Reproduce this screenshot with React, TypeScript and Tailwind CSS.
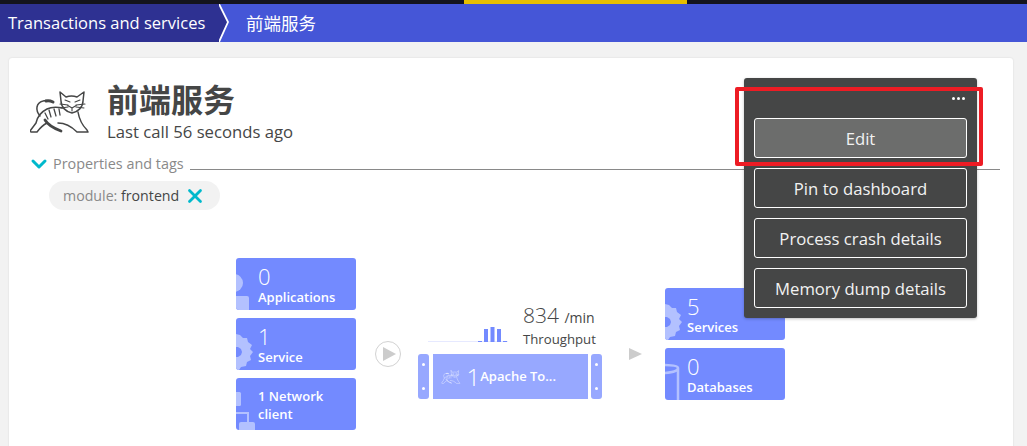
import type { ReactNode } from "react";
import { X, ChevronDown } from "lucide-react";

const font = "[font-family:'Open_Sans','Noto_Sans_CJK_SC',sans-serif]";

function Cat({ className, color = "#454646" }: { className: string; color?: string }) {
  return (
    <svg viewBox="0 0 60 44" className={className} fill="none" stroke={color} strokeLinecap="round" strokeLinejoin="round">
      <path strokeWidth="1.500" d="M30 2l1 9c0 6 5 11 11 12 6-1 11-6 11-12l1-9-7 5c-3-1-8-1-11 0z" />
      <path strokeWidth="1.100" d="M35 10l5 2M50 10l-5 2M37 15l5 3 5-3M42 18v3M30 14l8 1M46 15l9-1M31 18l7-1M46 17l8 1" />
      <path strokeWidth="1.500" d="M33 18c-6-1-12-1-16 1-6 3-10 9-11 14L0 41l1 1h6c3-4 6-7 10-9" />
      <path strokeWidth="1.500" d="M10 26C5 20 6 13 13 11c3-1 5 0 7 0" />
      <path strokeWidth="3" d="M16 11c3-1 5 0 7 1" />
      <path strokeWidth="1.500" d="M48 22c1 6 4 13 9 18l1 2H47c-5-5-11-9-19-9" />
      <path strokeWidth="2.800" d="M15 30c3 5 8 8 16 11" />
      <path strokeWidth="1.300" d="M19 20l2 7M24 19l2 7M29 19l1 6M15 23l3 6" />
    </svg>
  );
}

function Tile({ children, icon }: { children: ReactNode; icon: ReactNode }) {
  return (
    <div className="relative flex h-[52px] w-[120px] flex-col justify-center overflow-hidden rounded-[3px] bg-[#738aff] pt-[2px] pl-[22px] text-white">
      {icon}
      {children}
    </div>
  );
}

function Counted({ n, label }: { n: string; label: string }) {
  return (
    <>
      <span className="text-[22px] leading-[24px] font-light">{n}</span>
      <span className="text-[13px] leading-[18px] font-semibold">{label}</span>
    </>
  );
}

const gear = (
  <svg viewBox="0 0 18 36" className="absolute top-[16px] left-0 h-9 w-[18px]" fill="#b3c1ff">
    <path d="M0 0l4 1 3 3 4 0 1 4 4 3-2 4 3 3-3 4 1 4-4 2-1 4-5 1-2 3H0z" />
    <path d="M0 13h2l3 2 1 3-1 3-3 2H0z" fill="#738aff" />
  </svg>
);

const appIcon = (
  <svg viewBox="0 0 16 52" className="absolute top-0 left-0 h-[52px] w-4" fill="#b3c1ff">
    <circle cx="-2" cy="25" r="9" />
    <rect x="-3" y="38" width="16" height="18" rx="2" />
  </svg>
);

const netIcon = (
  <svg viewBox="0 0 20 52" className="absolute top-0 left-0 h-[52px] w-5" fill="#b3c1ff">
    <rect x="-2" y="14" width="7" height="14" rx="1.500" />
    <path d="M0 34h13v10h-2v-8H0z" />
    <rect x="3" y="44" width="16" height="10" rx="2" />
  </svg>
);

const dbIcon = (
  <svg viewBox="0 0 16 52" className="absolute top-0 left-0 h-[52px] w-4" fill="none" stroke="#b3c1ff" strokeWidth="2.500">
    <path d="M-4 17c6 0 17 0 17 3v32M-4 25c6 0 17-1 17-5" />
  </svg>
);

function Post() {
  return (
    <div className="flex h-[45px] w-[11px] flex-col items-center justify-between rounded-[3px] bg-[#97a8ff] py-[9px]">
      <span className="h-[3px] w-[3px] rounded-full bg-white" />
      <span className="h-[3px] w-[3px] rounded-full bg-white" />
    </div>
  );
}

function MenuButton({ children, active }: { children: ReactNode; active?: boolean }) {
  return (
    <button className={`h-10 w-full rounded-[3px] border border-white pt-[1px] text-[16.700px] text-[#f2f2f2] ${active ? "bg-[#6c6d6c]" : "bg-[#454646]"}`}>
      {children}
    </button>
  );
}

export default function App() {
  return (
    <div className={`relative h-[446px] w-[1027px] overflow-hidden bg-[#f2f2f2] ${font}`}>
      <div className="flex h-1 bg-[#14141e]">
        <div className="ml-[464px] w-[223px] bg-[#e6be00]" />
      </div>
      <div className="flex h-[38px] items-center bg-[#4556d7] text-white">
        <div className="flex h-full w-[219px] items-center bg-[#2e3192] pl-2 text-[16.500px]">Transactions and services</div>
        <svg viewBox="0 0 12 38" className="h-[38px] w-3 shrink-0" fill="#2e3192">
          <path d="M-1 0h1l9 18L0 38h-1z" />
          <path d="M0 0l9 18L0 38" fill="none" stroke="#fff" strokeWidth="1.800" />
        </svg>
        <span className="ml-[15px] text-[17.500px]">前端服务</span>
      </div>

      <div className="mx-[9px] mt-4 h-[400px] w-[1004px] rounded-t-[3px] bg-white pt-[26px] text-[#454646] shadow-[0_0_2px_rgba(0,0,0,0.12)]">
        <div className="flex pl-[21px]">
          <Cat className="mt-[6px] h-[44px] w-[60px]" />
          <div className="ml-[17px]">
            <h1 className="text-[32px] leading-[32px] font-bold">前端服务</h1>
            <p className="mt-[5px] text-[16.700px] leading-[22px]">Last call 56 seconds ago</p>
          </div>
        </div>
        <div className="mt-[9px] flex items-center pr-[13px] pl-[18px]">
          <ChevronDown size={24} strokeWidth={3} className="text-[#00b9cc]" />
          <span className="ml-[2px] text-[14.400px] leading-[20px] text-[#898989]">Properties and tags</span>
          <div className="mt-[10px] ml-[6px] h-px flex-1 bg-[#898989]" />
        </div>
        <div className="mt-[5px] ml-[40px] flex h-[29px] w-[171px] items-center rounded-full bg-[#f2f2f2] pl-[14px] text-[14.200px]">
          <span className="text-[#898989]">module:&nbsp;</span>
          <span>frontend</span>
          <X size={22} strokeWidth={3} className="ml-[5px] text-[#00b9cc]" />
        </div>

        <div className="mt-[48px] ml-[227px] flex items-start">
          <div className="flex flex-col gap-2">
            <Tile icon={appIcon}><Counted n="0" label="Applications" /></Tile>
            <Tile icon={gear}><Counted n="1" label="Service" /></Tile>
            <Tile icon={netIcon}>
              <span className="text-[13px] leading-[18px] font-semibold">1 Network client</span>
            </Tile>
          </div>

          <div className="mt-[83px] ml-[19px] flex h-[26px] w-[26px] items-center justify-center rounded-full border border-[#d2d2d2]">
            <span className="ml-[2px] h-0 w-0 border-y-[7px] border-l-[13px] border-y-transparent border-l-[#cccccc]" />
          </div>

          <div className="mt-[43px] ml-[17px] w-[184px]">
            <div className="flex h-[53px]">
              <div className="mt-[23px] ml-[10px] h-[18px] w-[80px]">
                <svg viewBox="0 0 80 18" className="h-[18px] w-[80px]">
                  <path d="M0 17.500h80" stroke="#e6e9ff" strokeWidth="1" />
                  <path d="M50 17h4v1h-4zM56 5h4v13h-4zM62.500 3h4v15h-4zM69 5h4v13h-4zM75 17h4v1h-4z" fill="#738aff" />
                </svg>
              </div>
              <div className="ml-[15px] flex flex-col pt-[2px]">
                <span className="text-[21px] leading-[24px] font-light whitespace-nowrap">
                  834 <span className="text-sm font-normal">/min</span>
                </span>
                <span className="mt-[2px] text-[13.200px] leading-[18px]">Throughput</span>
              </div>
            </div>
            <div className="flex justify-between">
              <Post />
              <div className="flex h-[45px] w-[155px] items-center bg-[#97a8ff] pl-[8px] text-white">
                <Cat className="h-[14px] w-[20px]" color="#e6eaff" />
                <span className="ml-[6px] text-[24px] leading-none font-light">1</span>
                <span className="text-[13px] font-semibold whitespace-nowrap">Apache To...</span>
              </div>
              <Post />
            </div>
          </div>

          <span className="mt-[90px] ml-[27px] h-0 w-0 border-y-[6px] border-l-[13px] border-y-transparent border-l-[#cccccc]" />

          <div className="mt-[30px] ml-[23px] flex flex-col gap-2">
            <Tile icon={gear}><Counted n="5" label="Services" /></Tile>
            <Tile icon={dbIcon}><Counted n="0" label="Databases" /></Tile>
          </div>
        </div>
      </div>

      <div className="absolute top-[78px] left-[744px] flex h-[240px] w-[233px] flex-col rounded-[3px] bg-[#454646] px-[10px] pb-[10px] shadow-[0_1px_3px_rgba(0,0,0,0.25)]">
        <div className="flex h-10 items-center justify-end gap-[2px] pt-[1px] pr-[2px]">
          <span className="h-[3px] w-[3px] rounded-full bg-white" />
          <span className="h-[3px] w-[3px] rounded-full bg-white" />
          <span className="h-[3px] w-[3px] rounded-full bg-white" />
        </div>
        <div className="flex flex-col gap-[10px]">
          <MenuButton active>Edit</MenuButton>
          <MenuButton>Pin to dashboard</MenuButton>
          <MenuButton>Process crash details</MenuButton>
          <MenuButton>Memory dump details</MenuButton>
        </div>
      </div>
      <div className="absolute top-[87px] left-[735px] h-[79px] w-[248px] rounded-[2px] border-[4px] border-[#ed1c24]" />
    </div>
  );
}
